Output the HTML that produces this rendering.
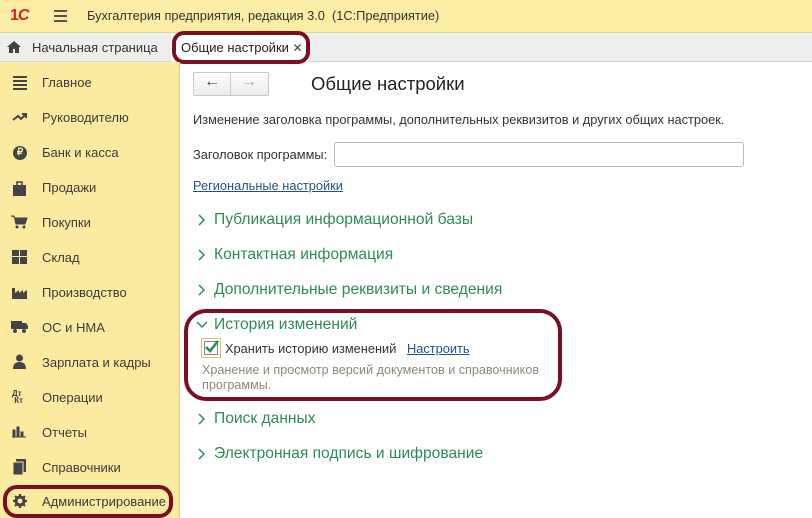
<!DOCTYPE html><html><head><meta charset="utf-8"><style>
*{margin:0;padding:0;box-sizing:border-box}
body{width:812px;height:518px;overflow:hidden;background:#fff;font-family:"Liberation Sans","Noto Sans CJK SC",sans-serif;color:#333;position:relative;font-size:13px}
.a{position:absolute;white-space:nowrap}
.top{left:0;top:0;width:812px;height:33px;background:#fbeda3;border-bottom:1px solid #e0d59a}
.tabs{left:0;top:33px;width:812px;height:29px;background:#eeeeee;border-bottom:1px solid #d6d6d6}
.side{left:0;top:62px;width:180px;height:456px;background:#faeba0;border-right:1px solid #d9cc8a}
.si{left:42px;font-size:13px;color:#3b3b3b}
.ic{left:12px;width:16px;height:14px;background:#4a4a4a}
.sec{left:214px;font-size:15.6px;color:#2e8b57}
.chev{left:197px;top:0;width:10px;height:12px}
.ring{border:4px solid #7a0f24;border-radius:16px}
a{color:#1f4f8f;text-decoration:underline}
</style></head><body>
<div class="a top"></div>
<div class="a" style="left:10px;top:7px;font-weight:bold;color:#d3202a;font-size:16px;letter-spacing:-1px">1<span style="font-style:italic">С</span></div>
<div class="a" style="left:54px;top:10px;width:13px;height:2px;background:#555;box-shadow:0 5px 0 #555,0 10px 0 #555"></div>
<div class="a" style="left:87px;top:8px;font-size:12.8px;color:#333">Бухгалтерия предприятия, редакция 3.0 &nbsp;(1С:Предприятие)</div>
<div class="a tabs"></div>
<svg class="a" style="left:7px;top:41px" width="14" height="12" viewBox="0 0 14 12"><path d="M7 0L0 6h2v6h4V8h2v4h4V6h2z" fill="#444"/></svg>
<div class="a" style="left:32px;top:40px;font-size:13px">Начальная страница</div>
<div class="a" style="left:171px;top:33px;width:137px;height:29px;background:#fff"></div>
<div class="a" style="left:181px;top:40px;font-size:13px;color:#222">Общие настройки <span style="font-size:12px;color:#444">✕</span></div>
<div class="a ring" style="left:172px;top:31px;width:138px;height:33px;border-radius:12px"></div>
<div class="a side"></div>
<div class="a si" style="top:75px">Главное</div><div class="a si" style="top:110px">Руководителю</div><div class="a si" style="top:145px">Банк и касса</div><div class="a si" style="top:180px">Продажи</div><div class="a si" style="top:215px">Покупки</div><div class="a si" style="top:250px">Склад</div><div class="a si" style="top:285px">Производство</div><div class="a si" style="top:320px">ОС и НМА</div><div class="a si" style="top:355px">Зарплата и кадры</div><div class="a si" style="top:390px">Операции</div><div class="a si" style="top:425px">Отчеты</div><div class="a si" style="top:460px">Справочники</div><div class="a si" style="top:494px">Администрирование</div>
<div class="a" style="left:13px;top:76px;width:14px;height:2px;background:#444;box-shadow:0 4px 0 #444,0 8px 0 #444,0 12px 0 #444"></div>
<svg class="a" style="left:12px;top:112px" width="16" height="10"><path d="M1 8l5-4 3 3 5-5M10 2h4v4" stroke="#444" stroke-width="2" fill="none"/></svg>
<div class="a" style="left:13px;top:146px;width:14px;height:14px;border-radius:50%;background:#444;color:#faeba0;font-size:10px;font-weight:bold;text-align:center;line-height:14px">₽</div>
<svg class="a" style="left:13px;top:180px" width="13" height="16"><path d="M4 5V2h5v3" stroke="#444" stroke-width="1.5" fill="none"/><rect y="5" width="13" height="11" fill="#444"/></svg>
<svg class="a" style="left:11px;top:215px" width="17" height="14"><path d="M0 1h3l2 8h9l2-6H4" fill="#444" stroke="#444"/><circle cx="6" cy="12" r="1.5" fill="#444"/><circle cx="13" cy="12" r="1.5" fill="#444"/></svg>
<svg class="a" style="left:12px;top:250px" width="15" height="14"><rect width="7" height="6" fill="#444"/><rect x="8" width="7" height="6" fill="#444"/><rect y="7" width="7" height="7" fill="#444"/><rect x="8" y="7" width="7" height="7" fill="#444"/></svg>
<svg class="a" style="left:12px;top:285px" width="16" height="14"><path d="M0 14V3h3v5l4-3v3l4-3v3l4-3v9z" fill="#444"/></svg>
<svg class="a" style="left:11px;top:321px" width="17" height="12"><rect width="11" height="8" fill="#444"/><path d="M11 2h4l2 3v3h-6z" fill="#444"/><circle cx="4" cy="10" r="2" fill="#444"/><circle cx="13" cy="10" r="2" fill="#444"/></svg>
<svg class="a" style="left:13px;top:354px" width="13" height="15"><circle cx="6.5" cy="4" r="3.5" fill="#444"/><path d="M0 15q0-7 6.5-7t6.5 7z" fill="#444"/></svg>
<div class="a" style="left:12px;top:390px;font-size:8px;font-weight:bold;color:#444;line-height:7px">Дт<br>&nbsp;Кт</div>
<svg class="a" style="left:12px;top:426px" width="14" height="12"><path d="M0 11h14M1 4h2v7H1zM5 1h2v10H5zM9 6h2v5H9z" fill="#444" stroke="#444"/></svg>
<svg class="a" style="left:13px;top:459px" width="13" height="16"><rect x="3" width="10" height="13" fill="#444"/><rect x="0" y="3" width="10" height="13" fill="#444" stroke="#faeba0"/></svg>
<svg class="a" style="left:13px;top:494px" width="14" height="14" viewBox="0 0 14 14"><circle cx="7" cy="7" r="4" fill="none" stroke="#444" stroke-width="3"/><path d="M7 0v3M7 11v3M0 7h3M11 7h3M2 2l2 2M10 10l2 2M2 12l2-2M10 4l2-2" stroke="#444" stroke-width="2.2"/></svg>
<div class="a ring" style="left:3px;top:485px;width:170px;height:33px;border-radius:14px"></div>
<div class="a" style="left:193px;top:72px;width:76px;height:24px;border:1px solid #c8c8c8;border-radius:2px;background:linear-gradient(#fdfdfd,#ececec)"></div>
<div class="a" style="left:230px;top:73px;width:1px;height:22px;background:#ccc"></div>
<div class="a" style="left:204px;top:73px;font-size:16px;color:#444;font-weight:bold">←</div>
<div class="a" style="left:241px;top:73px;font-size:16px;color:#aaa;font-weight:bold">→</div>
<div class="a" style="left:311px;top:73px;font-size:18.5px;color:#222">Общие настройки</div>
<div class="a" style="left:193px;top:112px;font-size:12.8px">Изменение заголовка программы, дополнительных реквизитов и других общих настроек.</div>
<div class="a" style="left:193px;top:147px;font-size:12.8px">Заголовок программы:</div>
<div class="a" style="left:334px;top:142px;width:410px;height:25px;border:1px solid #bbb;border-radius:3px"></div>
<div class="a" style="left:193px;top:178px;font-size:12.8px"><a>Региональные настройки</a></div>
<svg class="a chev" style="top:214px"><path d="M2 1l5 5-5 5" stroke="#2e8b57" stroke-width="1.5" fill="none"/></svg><div class="a sec" style="top:211px">Публикация информационной базы</div>
<svg class="a chev" style="top:249px"><path d="M2 1l5 5-5 5" stroke="#2e8b57" stroke-width="1.5" fill="none"/></svg><div class="a sec" style="top:246px">Контактная информация</div>
<svg class="a chev" style="top:284px"><path d="M2 1l5 5-5 5" stroke="#2e8b57" stroke-width="1.5" fill="none"/></svg><div class="a sec" style="top:281px">Дополнительные реквизиты и сведения</div>
<svg class="a" style="left:196px;top:321px" width="12" height="8"><path d="M1 1l5 5 5-5" stroke="#2e8b57" stroke-width="1.5" fill="none"/></svg><div class="a sec" style="top:316px">История изменений</div>
<div class="a" style="left:201px;top:338px;width:20px;height:20px;border:1px solid #e0c060;background:#fff"></div>
<div class="a" style="left:204px;top:341px;width:14px;height:14px;border:1px solid #888"></div>
<svg class="a" style="left:204px;top:339px" width="16" height="15"><path d="M2 8l4 4 8-10" stroke="#2e8b57" stroke-width="2.6" fill="none"/></svg>
<div class="a" style="left:225px;top:341px;font-size:12.8px">Хранить историю изменений &nbsp;&nbsp;<a>Настроить</a></div>
<div class="a" style="left:202px;top:363px;color:#8a8a7a;line-height:15px;white-space:normal;width:360px;font-size:12.6px">Хранение и просмотр версий документов и справочников программы.</div>
<div class="a ring" style="left:184px;top:309px;width:378px;height:92px;border-radius:22px"></div>
<svg class="a chev" style="top:413px"><path d="M2 1l5 5-5 5" stroke="#2e8b57" stroke-width="1.5" fill="none"/></svg><div class="a sec" style="top:410px">Поиск данных</div>
<svg class="a chev" style="top:448px"><path d="M2 1l5 5-5 5" stroke="#2e8b57" stroke-width="1.5" fill="none"/></svg><div class="a sec" style="top:445px">Электронная подпись и шифрование</div>
</body></html>
